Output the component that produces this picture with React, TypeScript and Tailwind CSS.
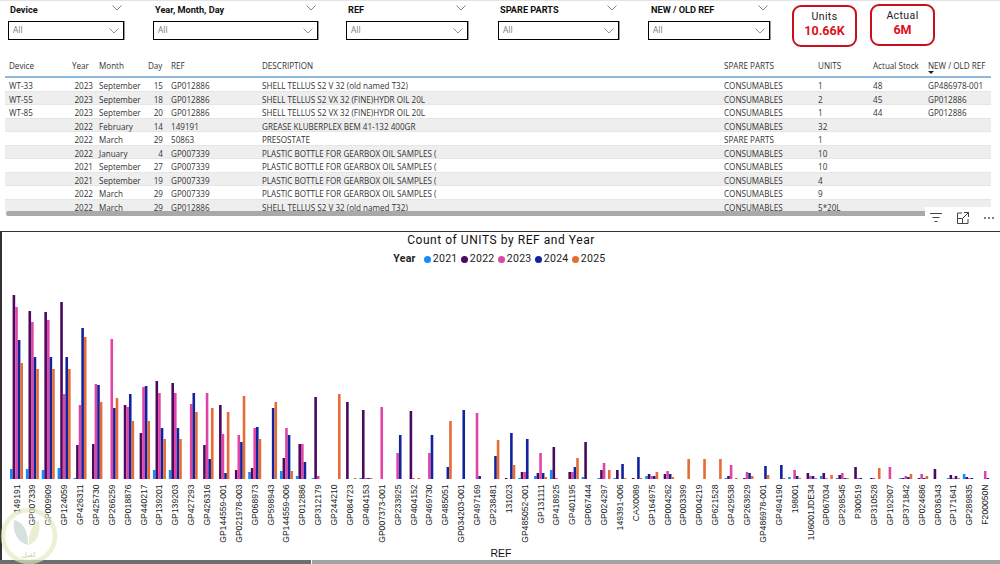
import React from "react";

const din = "font-['Roboto',sans-serif]";

function Chevron({ className = "", color = "#666" }: { className?: string; color?: string }) {
  return (
    <svg width="10" height="6" viewBox="0 0 10 6" className={className} fill="none" stroke={color} strokeWidth="0.8">
      <polyline points="0.5,0.5 5,5 9.5,0.5" />
    </svg>
  );
}

function Slicer({ title, w, titlePad }: { title: string; w: number; titlePad: number }) {
  return (
    <div style={{ width: w }} className="shrink-0">
      <div className="flex items-center justify-between h-[20px] pb-[3px] pr-[2px]" style={{ paddingLeft: titlePad }}>
        <span className={`${din} font-bold text-[9.2px] text-[#111]`}>{title}</span>
        <Chevron className="mb-[3px]" />
      </div>
      <div className="h-[19px] border border-black bg-white flex items-center justify-between pl-[4px] pr-[4px] shadow-[1px_0_0_#999]">
        <span className="font-['Open_Sans',sans-serif] text-[8.4px] text-[#777]">All</span>
        <Chevron color="#777" />
      </div>
    </div>
  );
}

function Card({ label, value, cls }: { label: string; value: string; cls: string }) {
  return (
    <div className={`w-[65px] h-[42px] shrink-0 rounded-[9px] border-2 border-[#c8101c] flex flex-col items-center pt-[3px] ${cls}`}>
      <span className={`${din} text-[10.5px] leading-[13px] text-[#222] tracking-[0.4px]`}>{label}</span>
      <span className={`${din} font-bold text-[12.5px] leading-[15px] text-[#e0101c]`}>{value}</span>
    </div>
  );
}

const gridCols = "grid grid-cols-[67px_21px_55px_15px_99px_462px_94px_55px_55px_63px]";
const rows = [
  ["WT-33", "2023", "September", "15", "GP012886", "SHELL TELLUS S2 V 32 (old named T32)", "CONSUMABLES", "1", "48", "GP486978-001"],
  ["WT-55", "2023", "September", "18", "GP012886", "SHELL TELLUS S2 VX 32 (FINE)HYDR OIL 20L", "CONSUMABLES", "2", "45", "GP012886"],
  ["WT-85", "2023", "September", "20", "GP012886", "SHELL TELLUS S2 VX 32 (FINE)HYDR OIL 20L", "CONSUMABLES", "1", "44", "GP012886"],
  ["", "2022", "February", "14", "149191", "GREASE KLUBERPLEX BEM 41-132 400GR", "CONSUMABLES", "32", "", ""],
  ["", "2022", "March", "29", "50863", "PRESOSTATE", "SPARE PARTS", "1", "", ""],
  ["", "2022", "January", "4", "GP007339", "PLASTIC BOTTLE FOR GEARBOX OIL SAMPLES (", "CONSUMABLES", "10", "", ""],
  ["", "2021", "September", "27", "GP007339", "PLASTIC BOTTLE FOR GEARBOX OIL SAMPLES (", "CONSUMABLES", "10", "", ""],
  ["", "2021", "September", "19", "GP007339", "PLASTIC BOTTLE FOR GEARBOX OIL SAMPLES (", "CONSUMABLES", "4", "", ""],
  ["", "2022", "March", "29", "GP007339", "PLASTIC BOTTLE FOR GEARBOX OIL SAMPLES (", "CONSUMABLES", "9", "", ""],
  ["", "2022", "March", "29", "GP012886", "SHELL TELLUS S2 V 32 (old named T32)", "CONSUMABLES", "5*20L", "", ""],
];
const heads = ["Device", "Year", "Month", "Day", "REF", "DESCRIPTION", "SPARE PARTS", "UNITS", "Actual Stock", "NEW / OLD REF"];
const cellPad = ["pl-[4px]", "text-right", "pl-[6px]", "text-right", "pl-[8px]", "", "", "", "", ""];
const headPad = ["pl-[4px]", "", "pl-[6px]", "", "pl-[8px]", "", "", "", "", ""];

const COLORS = ["#118dff", "#4a0a60", "#e044a7", "#12239e", "#e66c37"];
const data: [string, number, number, number, number, number][] = [
  ["149191", 10, 184, 172, 139, 116],
  ["GP007339", 10, 168, 157, 122, 110],
  ["GP009909", 9, 167, 159, 122, 110],
  ["GP124059", 11, 177, 85, 122, 110],
  ["GP426311", 1, 34, 74, 151, 142],
  ["GP425730", 0, 35, 95, 94, 77],
  ["GP266259", 0, 0, 140, 71, 81],
  ["GP018876", 0, 74, 72, 85, 58],
  ["GP440217", 0, 46, 92, 93, 58],
  ["GP139201", 9, 98, 86, 51, 40],
  ["GP139203", 9, 96, 86, 51, 40],
  ["GP427293", 0, 0, 75, 86, 67],
  ["GP426316", 0, 34, 86, 20, 71],
  ["GP144559-001", 0, 74, 45, 6, 67],
  ["GP021978-003", 0, 9, 44, 37, 83],
  ["GP068973", 7, 11, 51, 52, 40],
  ["GP598943", 0, 0, 0, 71, 77],
  ["GP144559-006", 8, 21, 51, 44, 8],
  ["GP012886", 3, 35, 35, 17, 0],
  ["GP312179", 1, 82, 3, 0, 0],
  ["GP244210", 0, 0, 0, 0, 85],
  ["GP084723", 0, 77, 0, 0, 1],
  ["GP404153", 1, 69, 1, 1, 1],
  ["GP007373-001", 0, 0, 72, 0, 0],
  ["GP233925", 0, 0, 26, 44, 0],
  ["GP404152", 0, 68, 1, 0, 1],
  ["GP469730", 0, 0, 26, 44, 0],
  ["GP485051", 0, 0, 0, 12, 58],
  ["GP034203-001", 0, 0, 0, 69, 0],
  ["GP497169", 0, 0, 66, 3, 0],
  ["GP238481", 0, 0, 0, 23, 39],
  ["131023", 0, 1, 0, 46, 14],
  ["GP485052-001", 1, 7, 7, 40, 0],
  ["GP131111", 3, 6, 26, 6, 2],
  ["GP418925", 9, 32, 1, 0, 0],
  ["GP401195", 0, 7, 7, 12, 21],
  ["GP067444", 2, 37, 0, 0, 0],
  ["GP024297", 1, 9, 16, 0, 9],
  ["149391-006", 1, 9, 0, 15, 1],
  ["CAX0089", 0, 1, 0, 22, 1],
  ["GP164975", 3, 5, 3, 3, 7],
  ["GP004262", 0, 5, 8, 5, 2],
  ["GP003399", 0, 0, 0, 0, 20],
  ["GP004219", 0, 0, 0, 0, 20],
  ["GP621528", 0, 0, 0, 0, 20],
  ["GP429538", 1, 3, 14, 0, 1],
  ["GP263929", 0, 1, 7, 6, 3],
  ["GP486978-001", 0, 0, 0, 13, 4],
  ["GP494190", 0, 0, 0, 14, 1],
  ["198001", 2, 0, 9, 3, 1],
  ["1U6001JDE34", 0, 6, 3, 3, 1],
  ["GP067034", 3, 6, 1, 0, 4],
  ["GP298545", 1, 4, 6, 1, 1],
  ["P300519", 0, 12, 1, 1, 0],
  ["GP310528", 0, 1, 1, 0, 11],
  ["GP192907", 0, 0, 12, 0, 0],
  ["GP371842", 1, 1, 3, 2, 5],
  ["GP024686", 0, 1, 5, 1, 3],
  ["GP036343", 0, 10, 0, 0, 0],
  ["GP171641", 1, 4, 1, 3, 1],
  ["GP289835", 5, 2, 1, 1, 0],
  ["F200050N", 0, 0, 8, 1, 0],
];

const BASE = 212;

function BarChart() {
  return (
    <svg width="999" height="278" className="block">
      {data.map((d, i) => {
        const cx = 16.5 + i * 15.88;
        return (
          <g key={d[0] + i}>
            {[d[1], d[2], d[3], d[4], d[5]].map((h, k) =>
              h > 0 ? <rect key={k} x={cx - 6.5 + k * 2.6} y={BASE - h} width={2.6} height={h} fill={COLORS[k]} /> : null
            )}
            <text
              transform={`translate(${cx + 3},${BASE + 5.5}) rotate(-90)`}
              textAnchor="end"
              fontFamily="'Liberation Sans',sans-serif"
              fontSize="8.6"
              fill="#222"
            >
              {d[0]}
            </text>
          </g>
        );
      })}
    </svg>
  );
}

function Watermark() {
  return (
    <svg width="62" height="62" viewBox="0 0 62 62" className="absolute left-0 top-[505px] pointer-events-none">
      <circle cx="29" cy="31" r="26" fill="#ffffff" fillOpacity="0.15" stroke="#dfe9bd" strokeWidth="4.5" strokeOpacity="0.65" />
      <path d="M14 15 C 23 17 28 25 28 40 C 19 38 12 29 14 15 Z" fill="#a9c3bb" fillOpacity="0.5" />
      <path d="M39 15 C 41 28 37 37 29 40 C 28 29 32 20 39 15 Z" fill="#dbe6b4" fillOpacity="0.6" />
      <text x="29" y="52" textAnchor="middle" fontSize="7" fontFamily="'DejaVu Sans',sans-serif" fill="#c3d6a0">كفيل</text>
    </svg>
  );
}

export default function App() {
  return (
    <div className="relative w-[1000px] h-[564px] overflow-hidden bg-white">
      <div className="h-[58px] flex items-start border-t border-[#e4e4e4] pl-[8px]">
        <div className="flex mr-[22px]">
          <Slicer title="Device" w={116} titlePad={2} />
          <div className="w-[29px]" />
          <Slicer title="Year, Month, Day" w={165} titlePad={2} />
          <div className="w-[28px]" />
          <Slicer title="REF" w={122} titlePad={2} />
          <div className="w-[30px]" />
          <Slicer title="SPARE PARTS" w={121} titlePad={2} />
          <div className="w-[29px]" />
          <Slicer title="NEW / OLD REF" w={122} titlePad={3} />
        </div>
        <Card label="Units" value="10.66K" cls="mt-[4px]" />
        <Card label="Actual" value="6M" cls="mt-[3px] ml-[13px]" />
      </div>

      <div className="relative h-[173px] pl-[5px] pr-[9px] font-['Open_Sans',sans-serif] text-[8.1px] text-[#333]">
        <div className={`${gridCols} h-[20px] pb-[2px] items-center border-b-2 border-[#8db9dc]`}>
          {heads.map((h, i) => (
            <div key={h} className={`${headPad[i]} whitespace-nowrap relative`}>
              {h}
              {i === 9 && (
                <svg width="6" height="3" className="absolute left-0 top-[11px]">
                  <polygon points="0,0 6,0 3,3" fill="#222" />
                </svg>
              )}
            </div>
          ))}
        </div>
        <div className="h-[133px] overflow-hidden">
          {rows.map((r, i) => (
            <div
              key={i}
              className={`${gridCols} h-[13.5px] leading-[15px] border-b border-[#e6e6e6] ${i % 2 === 1 ? "bg-[#eeeeee]" : "bg-white"}`}
            >
              {r.map((c, j) => (
                <div key={j} className={`${cellPad[j]} whitespace-nowrap`}>
                  {c}
                </div>
              ))}
            </div>
          ))}
        </div>
        <div className="h-[5px] ml-[1px] rounded-[2px] bg-[#a9a9a9]" />
        <div className="absolute right-[-8px] top-[3px] w-[6px] h-[6px] rounded-full bg-[#a8a8a8]" />
        <div className="absolute right-0 left-[925px] top-[149px] h-[22px] bg-white flex items-center text-[#444]">
          <svg width="14" height="12" viewBox="0 0 14 12" className="ml-[4px]" fill="none" stroke="#444" strokeWidth="1">
            <path d="M1 1.5H13M3.5 5.5H10.5M5.5 9.5H8.5" />
          </svg>
          <svg width="14" height="14" viewBox="0 0 14 14" className="ml-[13px]" fill="none" stroke="#444" strokeWidth="1">
            <path d="M6 2H1.5V12.5H12V8M8 1.5H12.5V6M12.5 1.5L7 7M1.5 7.5H6.5V12.5" />
          </svg>
          <svg width="12" height="4" viewBox="0 0 12 4" className="ml-[13px]" fill="#444">
            <circle cx="2" cy="2" r="0.9" />
            <circle cx="6" cy="2" r="0.9" />
            <circle cx="10" cy="2" r="0.9" />
          </svg>
        </div>
      </div>

      <div className="h-[329px] border-t border-l-2 border-[#333] flex flex-col">
        <div className={`${din} h-[16px] text-center text-[12px] leading-[16px] text-[#111] tracking-[0.55px]`}>
          Count of UNITS by REF and Year
        </div>
        <div className={`${din} h-[19px] pt-[3px] flex items-center justify-center text-[10.5px] text-[#222] tracking-[0.3px]`}>
          <span className="font-bold mr-[8px]">Year</span>
          {["2021", "2022", "2023", "2024", "2025"].map((y, i) => (
            <span key={y} className="flex items-center w-[37px]">
              <span className="w-[7px] h-[7px] rounded-full mr-[2px]" style={{ background: COLORS[i] }} />
              {y}
            </span>
          ))}
        </div>
        <div className="ml-[-2px] h-[278px] shrink-0">
          <BarChart />
        </div>
        <div className="font-['Liberation_Sans',sans-serif] text-center text-[10.5px] leading-[14px] pt-[1px] text-[#111]">REF</div>
      </div>
      <div className="absolute left-0 right-0 bottom-0 h-[4px] flex">
        <div className="w-[311px] bg-[#6e6e6e]" />
        <div className="w-[1px] bg-white" />
        <div className="flex-1 bg-[#a3a3a3]" />
      </div>
      <Watermark />
    </div>
  );
}
